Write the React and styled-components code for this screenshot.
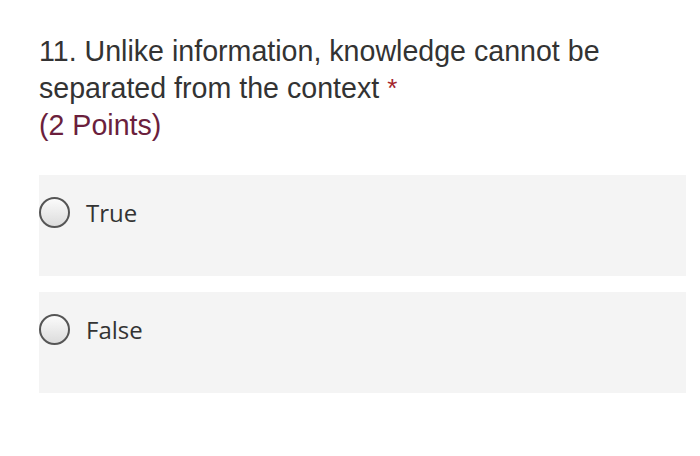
import styled, { createGlobalStyle } from 'styled-components';

const Global = createGlobalStyle`
  body {
    margin: 0;
    background: #fff;
  }
`;

const Page = styled.div`
  width: 700px;
  height: 456px;
  padding: 33px 14px 0 39px;
  box-sizing: border-box;
  display: flex;
  flex-direction: column;
`;

const Question = styled.div`
  font-family: "Liberation Sans", Arial, sans-serif;
  font-size: 28.6px;
  line-height: 37px;
  color: #333;
  margin-bottom: 31px;
`;

const Star = styled.span`
  color: #a4262c;
  font-size: 26px;
  vertical-align: top;
  margin-left: 8px;
`;

const Points = styled.div`
  color: #6b1f3d;
`;

const Options = styled.div`
  display: flex;
  flex-direction: column;
  gap: 16px;
`;

const Option = styled.label`
  height: 101px;
  background: #f4f4f4;
  display: flex;
  align-items: flex-start;
  padding-top: 22px;
  box-sizing: border-box;
  gap: 16px;
`;

const Radio = styled.span`
  width: 31px;
  height: 31px;
  box-sizing: border-box;
  border-radius: 50%;
  border: 2px solid #555;
  background: linear-gradient(#fbfbfb, #dcdcdc);
`;

const Label = styled.span`
  font-family: "Open Sans", "Noto Sans", sans-serif;
  font-size: 24px;
  line-height: 31px;
  color: #333;
`;

export default function App() {
  return (
    <Page>
      <Global />
      <Question>
        11. Unlike information, knowledge cannot be
        <br />
        separated from the context<Star>*</Star>
        <Points>(2 Points)</Points>
      </Question>
      <Options>
        {['True', 'False'].map((o) => (
          <Option key={o}>
            <Radio />
            <Label>{o}</Label>
          </Option>
        ))}
      </Options>
    </Page>
  );
}
